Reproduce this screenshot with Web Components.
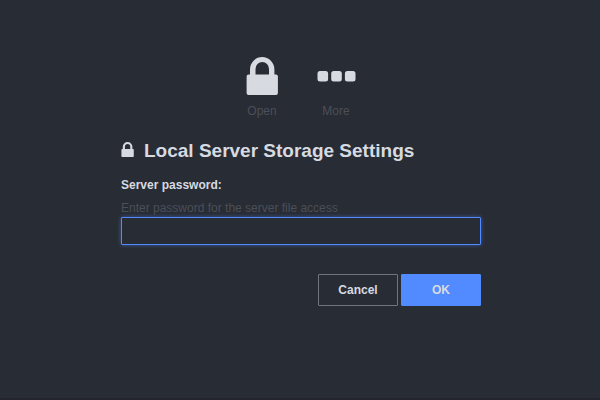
<!DOCTYPE html>
<html lang="en">
<head>
<meta charset="utf-8">
<title>Local Server Storage Settings</title>
<style>
  :root {
    --bg: #282c34;
    --text: #d7dae0;
    --subtle: #4b4f58;
    --accent: #528bff;
    --outline: #6f7480;
    --edge: #242430;
  }
  html, body { height: 100%; }
  body {
    margin: 0;
    background: var(--bg);
    color: var(--text);
    font: 12px/16px "Liberation Sans", Arial, sans-serif;
  }
</style>
</head>
<body>
<settings-page>
  <action-bar slot="actions">
    <action-item label="Open"><glyph-icon name="lock" style="--w:32px;--h:38px"></glyph-icon></action-item>
    <action-item label="More"><glyph-icon name="dots" style="--w:40px;--h:38px"></glyph-icon></action-item>
  </action-bar>
  <password-form heading="Local Server Storage Settings"></password-form>
</settings-page>

<script>
const glyphs = {
  lock: `<svg viewBox="0 0 32 38" aria-hidden="true"><path fill="currentColor" fill-rule="evenodd" d="M4 17.500V12.500a12.200 12.500 0 0 1 24.400 0V17.500H30a1.900 1.900 0 0 1 1.900 1.900V36.100a1.900 1.900 0 0 1-1.900 1.900H2.500a1.900 1.900 0 0 1-1.900-1.900V19.400a1.900 1.900 0 0 1 1.900-1.900zM9.500 17.500H23V12a6.750 6.900 0 0 0-13.500 0z"/></svg>`,
  dots: `<svg viewBox="0 0 40 38" aria-hidden="true"><g fill="currentColor"><rect x="1.500" y="14" width="10.600" height="10.400" rx="2.500"/><rect x="15.200" y="14" width="10.600" height="10.400" rx="2.500"/><rect x="28.900" y="14" width="10.600" height="10.400" rx="2.500"/></g></svg>`
};

class GlyphIcon extends HTMLElement {
  connectedCallback() {
    this.attachShadow({ mode: 'open' }).innerHTML = `
      <style>
        :host { display: block; width: var(--w); height: var(--h); flex: none; }
        svg { display: block; width: 100%; height: 100%; }
      </style>${glyphs[this.getAttribute('name')]}`;
  }
}

class ActionItem extends HTMLElement {
  connectedCallback() {
    this.attachShadow({ mode: 'open' }).innerHTML = `
      <style>
        :host { display: block; }
        button {
          display: flex; flex-direction: column; align-items: center; gap: 8px;
          margin: 0; padding: 0; border: 0; background: none;
          color: inherit; font: inherit; cursor: pointer;
        }
        span { color: var(--subtle); }
      </style>
      <button type="button"><slot></slot><span>${this.getAttribute('label')}</span></button>`;
  }
}

class ActionBar extends HTMLElement {
  connectedCallback() {
    this.attachShadow({ mode: 'open' }).innerHTML = `
      <style>:host { display: flex; justify-content: center; gap: 38px; }</style><slot></slot>`;
  }
}

class PasswordForm extends HTMLElement {
  connectedCallback() {
    this.attachShadow({ mode: 'open' }).innerHTML = `
      <style>
        :host { display: block; }
        h1 {
          display: flex; align-items: baseline; gap: 10px;
          margin: 0 0 14px; font-size: 19px; line-height: 24px; font-weight: bold;
        }
        label { display: block; font-weight: bold; }
        p { margin: 7px 0 1px; color: var(--subtle); }
        input {
          display: block; box-sizing: border-box; width: 100%; height: 28px;
          margin: 0; padding: 0 8px; border: 1px solid var(--accent); border-radius: 1px;
          outline: 0; background: transparent; color: inherit; font: inherit;
          box-shadow: 0 0 4px rgba(82, 139, 255, .5);
        }
        footer { display: flex; justify-content: flex-end; gap: 3px; margin-top: 29px; }
        button {
          box-sizing: border-box; width: 80px; height: 32px; margin: 0; padding: 0;
          border: 1px solid var(--outline); border-radius: 1px;
          background: transparent; color: inherit; font: inherit; font-weight: bold;
        }
        button.primary { background: var(--accent); border-color: var(--accent); }
      </style>
      <form>
        <h1><glyph-icon name="lock" style="--w:13px;--h:15px"></glyph-icon>${this.getAttribute('heading')}</h1>
        <label for="password">Server password:</label>
        <p id="hint">Enter password for the server file access</p>
        <input id="password" type="password" aria-describedby="hint">
        <footer>
          <button type="button">Cancel</button>
          <button type="button" class="primary">OK</button>
        </footer>
      </form>`;
  }
}

class SettingsPage extends HTMLElement {
  connectedCallback() {
    this.attachShadow({ mode: 'open' }).innerHTML = `
      <style>
        :host {
          display: block; box-sizing: border-box; min-height: 100%;
          padding: 57px 0 16px 2px; border-bottom: 2px solid var(--edge);
        }
        main { display: grid; gap: 20px; width: 100%; max-width: 360px; margin: 0 auto; }
      </style>
      <main><slot name="actions"></slot><slot></slot></main>`;
  }
}

customElements.define('glyph-icon', GlyphIcon);
customElements.define('action-item', ActionItem);
customElements.define('action-bar', ActionBar);
customElements.define('password-form', PasswordForm);
customElements.define('settings-page', SettingsPage);
</script>
</body>
</html>
